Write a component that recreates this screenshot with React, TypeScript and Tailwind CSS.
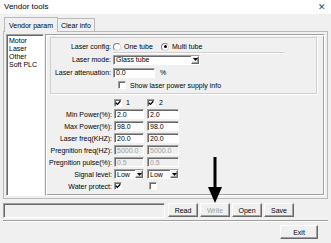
import React from "react";

const sunken =
  "border border-[#a0a0a0] border-b-white border-r-white shadow-[inset_1px_1px_0_#696969]";
const raised =
  "border border-white border-r-[#696969] border-b-[#696969] shadow-[inset_-1px_-1px_0_#a0a0a0]";

function Check({ on }: { on?: boolean }) {
  return (
    <span className={`inline-flex h-[8px] w-[8px] shrink-0 items-center justify-center bg-white ${sunken}`}>
      {on && (
        <svg width="6" height="6" viewBox="0 0 6 6">
          <path d="M0.8 2.8 L2.4 4.4 L5.3 1.2" stroke="#000" strokeWidth="1.3" fill="none" />
        </svg>
      )}
    </span>
  );
}

function Radio({ on }: { on?: boolean }) {
  return (
    <span className="inline-flex h-[8px] w-[8px] shrink-0 items-center justify-center rounded-full border border-[#808080] border-b-[#d8d8d8] border-r-[#d8d8d8] bg-white">
      {on && <span className="h-[3px] w-[3px] rounded-full bg-black" />}
    </span>
  );
}

function Field({ value, off, cls }: { value: string; off?: boolean; cls: string }) {
  return (
    <div
      className={`flex h-[10px] items-center px-[2px] ${sunken} ${cls} ${
        off ? "bg-[#f0f0f0] text-[#a0a0a0]" : "bg-white text-black"
      }`}
    >
      {value}
    </div>
  );
}

function Select({ value, cls }: { value: string; cls: string }) {
  return (
    <div className={`flex h-[10px] items-center justify-between bg-white pl-[2px] ${sunken} ${cls}`}>
      <span>{value}</span>
      <span className={`flex h-[8px] w-[8px] items-center justify-center bg-[#f0f0f0] ${raised}`}>
        <svg width="5" height="3" viewBox="0 0 5 3">
          <path d="M0 0 H5 L2.5 3 Z" fill="#000" />
        </svg>
      </span>
    </div>
  );
}

function Row({ label, children }: { label: string; children: React.ReactNode }) {
  return (
    <div className="flex h-[12px] items-center">
      <div className="w-[67px] whitespace-nowrap pr-[2px] text-right">{label}</div>
      <div className="flex items-center gap-[3px]">{children}</div>
    </div>
  );
}

function Btn({ label, off, cls }: { label: string; off?: boolean; cls: string }) {
  return (
    <div className={`flex h-[14px] items-center justify-center bg-[#f0f0f0] ${raised} ${cls} ${off ? "text-[#a0a0a0]" : ""}`}>
      {label}
    </div>
  );
}

export default function App() {
  return (
    <div className="relative h-[243px] w-[331px] overflow-hidden bg-[#f0f0f0] font-['Liberation_Sans',Arial,sans-serif] text-[7px] leading-none text-black">
      {/* title bar */}
      <div className="flex h-[14px] items-center justify-between bg-white pl-[4px] pr-[5px]">
        <span className="text-[8px]">Vendor tools</span>
        <span className="text-[9px] text-[#444]">✕</span>
      </div>

      <div className="px-[3px]">
        {/* tabs */}
        <div className="flex h-[17px] items-end pl-[1px]">
          <div className="relative z-10 -mb-px flex h-[15px] items-center border border-b-0 border-[#b9b9b9] bg-[#f0f0f0] px-[4px]">
            Vendor param
          </div>
          <div className="flex h-[13px] items-center border border-b-0 border-l-0 border-[#b9b9b9] px-[3px]">
            Clear info
          </div>
        </div>

        {/* tab page */}
        <div className="flex h-[168px] gap-[1px] border border-[#b9b9b9] p-[2px]">
          <div className={`w-[38px] bg-white pl-[2px] pt-[2px] ${sunken}`}>
            <div className="h-[8px]">Motor</div>
            <div className="h-[8px]">Laser</div>
            <div className="h-[8px]">Other</div>
            <div className="h-[8px]">Soft PLC</div>
          </div>

          <div className="flex-1 border border-[#a0a0a0] border-b-white border-r-white shadow-[inset_1px_1px_0_white,inset_-1px_-1px_0_#a0a0a0]">
            {/* group */}
            <div className="ml-[4px] mr-[7px] mt-[2px] h-[57px] border border-[#d0d0d0] pt-[2px] shadow-[1px_1px_0_white]">
              <div className="relative flex h-[13px] items-center">
                <div className="w-[62px] pr-[2px] text-right">Laser config:</div>
                <Radio />
                <span className="ml-[3px] w-[37px]">One tube</span>
                <Radio on />
                <span className="ml-[3px]">Multi tube</span>
                <div className="absolute bottom-[-1px] left-[62px] h-[2px] w-[172px] border-b border-t border-[#d0d0d0] border-b-white" />
              </div>
              <div className="flex h-[13px] items-center">
                <div className="w-[62px] pr-[2px] text-right">Laser mode:</div>
                <Select value="Glass tube" cls="w-[87px]" />
              </div>
              <div className="flex h-[13px] items-center">
                <div className="w-[62px] whitespace-nowrap pr-[2px] text-right">Laser attenuation:</div>
                <Field value="0.0" cls="w-[42px]" />
                <span className="ml-[5px]">%</span>
              </div>
              <div className="flex h-[12px] items-center pl-[67px]">
                <Check />
                <span className="ml-[4px]">Show laser power supply info</span>
              </div>
            </div>

            {/* parameters */}
            <div className="mt-[3px] pl-[1px]">
              <div className="flex h-[11px] items-center">
                <div className="w-[67px]" />
                <div className="flex w-[33px] items-center gap-[4px]">
                  <Check on />
                  <span>1</span>
                </div>
                <div className="flex items-center gap-[4px]">
                  <Check on />
                  <span>2</span>
                </div>
              </div>
              <Row label="Min Power(%):">
                <Field value="2.0" cls="w-[30px]" />
                <Field value="2.0" cls="w-[32px]" />
              </Row>
              <Row label="Max Power(%):">
                <Field value="98.0" cls="w-[30px]" />
                <Field value="98.0" cls="w-[32px]" />
              </Row>
              <Row label="Laser freq(KHZ):">
                <Field value="20.0" cls="w-[30px]" />
                <Field value="20.0" cls="w-[32px]" />
              </Row>
              <Row label="Pregnition freq(HZ):">
                <Field value="5000.0" off cls="w-[30px]" />
                <Field value="5000.0" off cls="w-[32px]" />
              </Row>
              <Row label="Pregnition pulse(%):">
                <Field value="0.5" off cls="w-[30px]" />
                <Field value="0.5" off cls="w-[32px]" />
              </Row>
              <Row label="Signal level:">
                <Select value="Low" cls="w-[30px]" />
                <Select value="Low" cls="w-[32px]" />
              </Row>
              <Row label="Water protect:">
                <div className="w-[30px]">
                  <Check on />
                </div>
                <div className="pl-[2px]">
                  <Check />
                </div>
              </Row>
            </div>
          </div>
        </div>

        {/* status + buttons */}
        <div className="mt-[3px] flex h-[16px] items-center">
          <div className={`h-[15px] w-[162px] ${sunken}`} />
          <div className="ml-[3px] flex gap-[2px]">
            <Btn label="Read" cls="w-[30px]" />
            <Btn label="Write" off cls="w-[30px]" />
            <Btn label="Open" cls="w-[30px]" />
            <Btn label="Save" cls="w-[30px]" />
          </div>
        </div>
        <div className="mt-[2px] h-[2px] border-b border-t border-[#a0a0a0] border-b-white" />
        <div className="mt-[3px] flex justify-end pr-[10px]">
          <Btn label="Exit" cls="w-[38px]" />
        </div>
      </div>

      {/* annotation arrow */}
      <svg className="absolute left-[207px] top-[157px]" width="16" height="47" viewBox="0 0 16 47">
        <path d="M8 0 V32" stroke="#000" strokeWidth="3" />
        <path d="M1 30 L15 30 L8 46 Z" fill="#000" />
      </svg>
    </div>
  );
}
